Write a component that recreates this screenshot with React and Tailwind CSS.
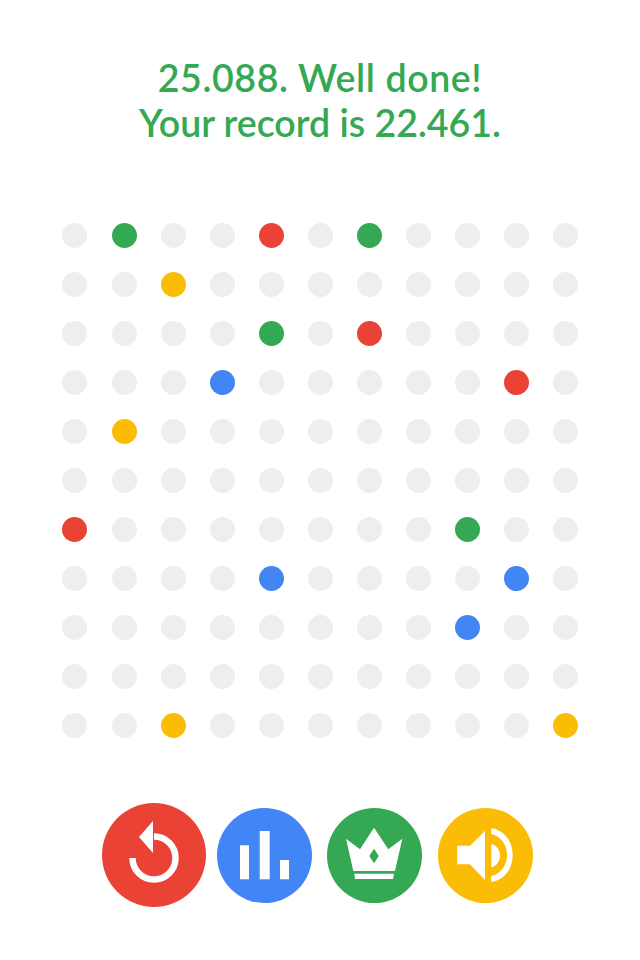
import React from 'react';

const GREEN = 'bg-[#34a853]';
const RED = 'bg-[#ea4335]';
const BLUE = 'bg-[#4285f4]';
const YELLOW = 'bg-[#fbbc05]';

// row-col -> colour of the lit dots
const litDots = {
  '0-1': GREEN,
  '0-4': RED,
  '0-6': GREEN,
  '1-2': YELLOW,
  '2-4': GREEN,
  '2-6': RED,
  '3-3': BLUE,
  '3-9': RED,
  '4-1': YELLOW,
  '6-0': RED,
  '6-8': GREEN,
  '7-4': BLUE,
  '7-9': BLUE,
  '8-8': BLUE,
  '10-2': YELLOW,
  '10-10': YELLOW,
};

const indexes = Array.from({ length: 11 }, (_, i) => i);

const App = () => {
  return (
    <div className="flex h-[960px] w-[640px] flex-col items-center bg-white font-['Lato',sans-serif]">
      {/* Score */}
      <div className="mt-[55px] text-center text-[37.5px] font-semibold leading-[45px] text-[#34a853]">
        <p className="tracking-[0.6px]">25.088. Well done!</p>
        <p>Your record is 22.461.</p>
      </div>

      {/* Board */}
      <div className="mt-[78px] ml-[0.8px] grid grid-cols-[repeat(11,25px)] gap-x-[24.1px] gap-y-[24px]">
        {indexes.map((row) =>
          indexes.map((col) => (
            <div
              key={`${row}-${col}`}
              className={`h-[25px] w-[25px] rounded-full ${litDots[`${row}-${col}`] || 'bg-[#eeeeee]'}`}
            />
          ))
        )}
      </div>

      {/* Buttons */}
      <div className="mt-[65px] mr-[5px] flex items-center">
        <button className={`h-[104px] w-[104px] rounded-full ${RED}`}>
          <svg viewBox="0 0 104 104" className="h-full w-full">
            <path d="M30.5 55A21.5 21.5 0 1 0 52 33.5" fill="none" stroke="#fff" strokeWidth="6.5" />
            <path d="M37 34 51 18V50Z" fill="#fff" />
          </svg>
        </button>
        <button className={`ml-[11px] h-[95px] w-[95px] rounded-full ${BLUE}`}>
          <svg viewBox="0 0 95 95" className="h-full w-full" fill="#fff">
            <rect x="23" y="37.3" width="9" height="34" />
            <rect x="42.7" y="23" width="10" height="48.3" />
            <rect x="63" y="52" width="9" height="19.3" />
          </svg>
        </button>
        <button className={`ml-[15px] h-[95px] w-[95px] rounded-full ${GREEN}`}>
          <svg viewBox="0 0 95 95" className="h-full w-full">
            <path d="M19 30.7 33 41.3 47 19.7 61.3 41.3 75.3 30.7 68 63H26.3Z" fill="#fff" />
            <path d="M27.3 65.7H67L66 71H28Z" fill="#fff" />
            <path d="M47 40.7 51.7 48 47 55.3 42.3 48Z" fill="#34a853" />
          </svg>
        </button>
        <button className={`ml-[16px] h-[95px] w-[95px] rounded-full ${YELLOW}`}>
          <svg viewBox="0 0 95 95" className="h-full w-full" fill="#fff">
            <path d="M19.3 37.7H32L47 22.7V72L32 56.3H19.3Z" />
            <path d="M53.3 36C58.5 37 62 42 62 47.5 62 53 58.5 58 53.3 59.3Z" />
            <path d="M53.3 20.3C66 22 74.7 33 74.7 47 74.7 61 66 72 53.3 74V68C63 66 69 57 69 47 69 37 63 28 53.3 26Z" />
          </svg>
        </button>
      </div>
    </div>
  );
};

export default App;
